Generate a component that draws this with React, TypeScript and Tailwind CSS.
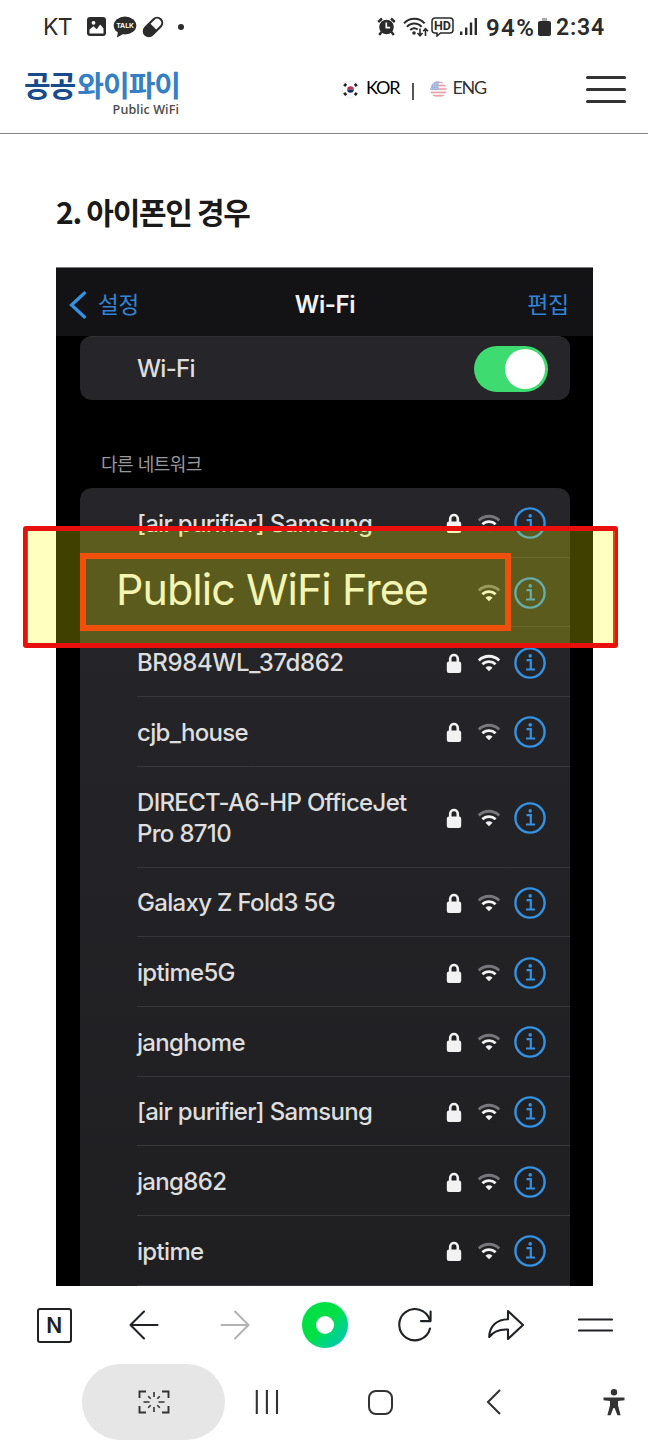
import React from 'react';

interface Network {
  name: string;
  tall?: boolean;
  strong?: boolean;
}

const networks: Network[] = [
  { name: 'BR984WL_37d862', strong: true },
  { name: 'cjb_house' },
  { name: 'DIRECT-A6-HP OfficeJet Pro 8710', tall: true },
  { name: 'Galaxy Z Fold3 5G' },
  { name: 'iptime5G' },
  { name: 'janghome' },
  { name: '[air purifier] Samsung' },
  { name: 'jang862' },
  { name: 'iptime' },
];

const LockIcon = () => (
  <svg width="16" height="22" viewBox="0 0 16 22" fill="none">
    <path d="M4.200 11V6.800a3.800 3.800 0 0 1 7.600 0V11" stroke="#f2f2f2" strokeWidth="2.6" />
    <rect x="0.8" y="9.500" width="14.400" height="11.500" rx="2.200" fill="#f2f2f2" />
  </svg>
);

const WifiIcon = ({ strong }: { strong?: boolean }) => (
  <svg width="24" height="18" viewBox="0 0 24 18" fill="none" strokeWidth="2.8">
    <path d="M1.800 6.400a14.600 14.600 0 0 1 20.400 0" stroke={strong ? '#f2f2f2' : '#77777b'} />
    <path d="M5.400 10.300a9.400 9.400 0 0 1 13.200 0" stroke="#f2f2f2" />
    <path d="M12 17.300l-3.500-3.600a5 5 0 0 1 7 0z" fill="#f2f2f2" />
  </svg>
);

const InfoIcon = () => (
  <svg width="32" height="32" viewBox="0 0 32 32" fill="none" stroke="#3492e2">
    <circle cx="16" cy="16" r="14.600" strokeWidth="2.4" />
    <path d="M12.500 13.200h4.300v9.300M12 22.500h9" strokeWidth="2.2" />
    <circle cx="16.200" cy="8.900" r="1.800" fill="#3492e2" stroke="none" />
  </svg>
);

const RowIcons = ({ locked = true, strong }: { locked?: boolean; strong?: boolean }) => (
  <div className="flex shrink-0 items-center pt-[2px]">
    <div className="w-4">{locked && <LockIcon />}</div>
    <div className="ml-[15px]"><WifiIcon strong={strong} /></div>
    <div className="ml-[13px]"><InfoIcon /></div>
  </div>
);

const NetworkRow = ({ name, tall, strong }: Network) => (
  <div className="pl-[57px]">
    <div
      className={`flex items-center justify-between border-b border-[#38383c] pr-6 ${
        tall ? 'h-[100.8px]' : 'h-[69.7px]'
      }`}
    >
      <span
        className={`w-[290px] pt-[2px] text-[24px] leading-[31px] font-medium text-[#dedede] ${
          strong ? 'tracking-[-0.4px]' : 'tracking-[-0.68px]'
        }`}
      >
        {name}
      </span>
      <RowIcons strong={strong} />
    </div>
  </div>
);

const StatusBar = () => (
  <div className="flex h-[53px] items-center justify-between pr-[43px] pl-[43px] text-[#2b2b2b]">
    <div className="flex items-center">
      <span className="w-[44px] pt-[2px] font-['Inter'] text-[23px] leading-none tracking-[-0.8px]">KT</span>
      <svg width="19" height="19" viewBox="0 0 19 19">
        <rect width="19" height="19" rx="3" fill="#2b2b2b" />
        <circle cx="6.500" cy="5.800" r="1.900" fill="#fff" />
        <path d="M2.500 16.500v-4l4-3.300 3.200 3 3.500-4.600 3.300 4v4.900z" fill="#fff" />
      </svg>
      <svg className="ml-[7px]" width="24" height="22" viewBox="0 0 24 22">
        <ellipse cx="12" cy="9.500" rx="11.300" ry="9" fill="#2b2b2b" />
        <path d="M5 15l-1 6.500 7-4z" fill="#2b2b2b" />
        <text x="12" y="12.200" textAnchor="middle" fontSize="6.800" fontWeight="700" fontFamily="Inter, sans-serif" fill="#fff">TALK</text>
      </svg>
      <svg className="ml-[5px]" width="22" height="22" viewBox="0 0 22 22">
        <g transform="rotate(-45 11 11)">
          <rect x="-1" y="4.900" width="24" height="12.200" rx="6.100" fill="#2b2b2b" />
          <path d="M11.500 7h5.400a4 4 0 0 1 0 8h-5.400z" fill="#fff" />
        </g>
      </svg>
      <div className="ml-[14px] size-[6px] rounded-full bg-[#2b2b2b]" />
    </div>
    <div className="flex items-center">
      <svg width="19" height="19" viewBox="0 0 19 19" fill="none" stroke="#2b2b2b">
        <circle cx="9.500" cy="10" r="7.300" fill="#2b2b2b" stroke="none" />
        <path d="M1.200 5L5 1.500M17.800 5L14 1.500M4.500 15l-2.300 3M14.500 15l2.300 3" strokeWidth="2.4" />
        <path d="M9.300 5.500v5.200h3.800" stroke="#fff" strokeWidth="1.700" />
      </svg>
      <svg className="ml-[7px]" width="26" height="20" viewBox="0 0 26 20" fill="none" stroke="#2b2b2b" strokeWidth="2">
        <path d="M1 6.300a13.800 13.800 0 0 1 20.600 0M4 9.800a9.500 9.500 0 0 1 14.600 0M7.200 13.100a5.300 5.300 0 0 1 7.500-.6" />
        <circle cx="11" cy="16" r="1.800" fill="#2b2b2b" stroke="none" />
        <path d="M17 11.500v7M14.500 16l2.500 2.700 2.500-2.700M22.500 19v-7M20.200 14.300l2.300-2.600 2.600 2.600" strokeWidth="1.600" />
      </svg>
      <svg className="ml-[2px]" width="23" height="20" viewBox="0 0 23 20">
        <path d="M4 1h15a3 3 0 0 1 3 3v9a3 3 0 0 1-3 3H9.500L6 19v-3H4a3 3 0 0 1-3-3V4a3 3 0 0 1 3-3z" fill="none" stroke="#2b2b2b" strokeWidth="1.500" />
        <text x="11.500" y="13" textAnchor="middle" fontSize="12.500" fontWeight="700" fontFamily="Roboto, sans-serif" fill="#2b2b2b">HD</text>
      </svg>
      <svg className="ml-[6px]" width="18" height="19" viewBox="0 0 18 19" fill="#2b2b2b">
        <rect x="0" y="14.500" width="2.400" height="3.500" />
        <rect x="5" y="10.500" width="2.400" height="7.500" />
        <rect x="9.800" y="5.500" width="2.400" height="12.500" />
        <rect x="14.600" y="1" width="2.400" height="17" />
      </svg>
      <span className="ml-[8px] w-[51px] pt-[2px] font-['Roboto'] text-[24px] leading-none font-semibold tracking-[1.4px] whitespace-nowrap">94%</span>
      <div className="ml-[1px] flex flex-col items-center">
        <div className="h-[3px] w-[5px] bg-[#aaa]" />
        <div className="h-[15px] w-[13px] rounded-[2px] bg-[#2b2b2b]" />
      </div>
      <span className="ml-[5px] w-[49px] pt-[2px] font-['Roboto'] text-[23px] leading-none font-semibold tracking-[0.8px] whitespace-nowrap">2:34</span>
    </div>
  </div>
);

const KoreaFlag = () => (
  <svg width="17" height="17" viewBox="0 0 17 17">
    <circle cx="8.500" cy="8.500" r="8" fill="#fff" stroke="#e3e3e3" strokeWidth="0.800" />
    <path d="M5.200 8.500a3.300 3.300 0 0 1 6.600 0z" fill="#c0304a" />
    <path d="M5.200 8.500a3.300 3.300 0 0 0 6.600 0z" fill="#1c2b66" />
    <path d="M2.200 5.200l2-2.400M12.800 2.800l2 2.400M2.200 11.800l2 2.400M12.800 14.200l2-2.400" stroke="#222" strokeWidth="2.600" />
  </svg>
);

const UsaFlag = () => (
  <svg width="17" height="17" viewBox="0 0 17 17">
    <clipPath id="usa">
      <circle cx="8.500" cy="8.500" r="8.200" />
    </clipPath>
    <g clipPath="url(#usa)">
      <rect width="17" height="17" fill="#f8f0f2" />
      <path d="M0 1.200h17M0 4.600h17M0 8h17M0 11.400h17M0 14.800h17" stroke="#eba0a6" strokeWidth="1.500" />
      <rect width="8.500" height="9" fill="#9fb2dc" />
      <path d="M1 3h7M1 5.200h7M1 7.400h7" stroke="#dfe6f5" strokeWidth="0.800" strokeDasharray="1 1.200" />
    </g>
  </svg>
);

const SiteHeader = () => (
  <header className="flex h-[81px] border-b border-[#858585] pr-[22px] pl-6">
    <div className="flex w-[156px] flex-col items-end pt-[13px]">
      <div className="font-['Noto_Sans_CJK_KR'] text-[29px] leading-[37px] font-bold tracking-[-1px] whitespace-nowrap">
        <span className="text-[#174b8c]">공공</span>
        <span className="ml-[2px] text-[#3580c4]">와이파이</span>
      </div>
      <span className="pr-[1px] font-['Open_Sans'] text-[12.5px] leading-[14px] font-semibold tracking-[0.1px] text-[#4c4c4c]">Public WiFi</span>
    </div>
    <div className="ml-[162px] flex items-start pt-[24px] font-['Lato'] text-[18px] leading-[20px]">
      <div className="pt-[4px]"><KoreaFlag /></div>
      <span className="ml-[7px] w-[34px] tracking-[-1.1px] text-black">KOR</span>
      <div className="mt-[6px] ml-[12px] h-[17px] w-[1.5px] bg-[#555]" />
      <div className="ml-[16px] pt-[4px]"><UsaFlag /></div>
      <span className="ml-[6px] tracking-[-1.3px] text-[#333]">ENG</span>
    </div>
    <button className="mt-[23px] ml-auto flex h-[27px] w-10 flex-col justify-between" aria-label="메뉴">
      <span className="h-[3px] w-full rounded bg-[#333]" />
      <span className="h-[3px] w-full rounded bg-[#333]" />
      <span className="h-[3px] w-full rounded bg-[#333]" />
    </button>
  </header>
);

const PhoneScreen = () => (
  <div className="relative mt-[36px] ml-[56px] h-[1019px] w-[537px] border-t border-[#777] bg-black font-['Inter','Noto_Sans_CJK_KR',sans-serif]">
    <div className="flex h-[68px] items-center justify-between bg-[#131315] pt-[6px] pr-[24px] pl-[13px] text-[24px] text-[#3184d4]">
      <div className="flex w-[110px] items-center">
        <svg width="18" height="28" viewBox="0 0 18 28" fill="none" stroke="#3492e2" strokeWidth="3.200" strokeLinecap="round">
          <path d="M15.500 2L2.500 14l13 12" />
        </svg>
        <span className="ml-[11px] text-[22.5px] tracking-[-0.3px]">설정</span>
      </div>
      <span className="pl-[12px] font-semibold tracking-[-0.4px] text-[#f2f2f2]">Wi-Fi</span>
      <span className="w-[110px] text-right text-[23px] tracking-[-0.3px]">편집</span>
    </div>

    <div className="mx-6 flex h-[64px] w-[490px] items-center justify-between rounded-xl border-t border-[#303034] bg-[#25252a] pr-[22px] pl-[57px]">
      <span className="text-[24px] font-medium tracking-[-0.7px] text-[#dedede]">Wi-Fi</span>
      <div className="flex h-[46px] w-[74px] items-center justify-end rounded-full bg-[#3edb70] pr-[3px]">
        <div className="size-[40px] rounded-full bg-white" />
      </div>
    </div>

    <div className="flex h-[88px] items-end pb-[11px] pl-[45px] text-[18px] leading-[24px] tracking-[-0.5px] text-[#98989d]">다른 네트워크</div>

    <div className="mx-6 h-[798px] w-[490px] overflow-hidden rounded-t-xl bg-linear-to-b from-[#26262a] to-[#1f1f22]">
      <NetworkRow name="[air purifier] Samsung" />
      <div className="pl-[36px]">
        <div className="flex h-[69.7px] items-center justify-between border-b border-[#38383c] pr-6">
          <span className="mb-[6px] text-[43px] leading-none tracking-[-0.95px] whitespace-nowrap text-[#f2f2ee]">Public WiFi Free</span>
          <RowIcons locked={false} />
        </div>
      </div>
      {networks.map((network, i) => (
        <NetworkRow key={i} {...network} />
      ))}
    </div>

    {/* Highlight over the network to pick */}
    <div className="absolute top-[285px] left-[24px] h-[78px] w-[431px] border-[6px] border-[#eb1410]" />
    <div className="absolute top-[258px] left-[-33px] h-[122px] w-[595px] rounded-[3px] border-[5px] border-r-[3px] border-l-[4px] border-[#e80f0c] bg-[#ffff00]/25 bg-clip-padding shadow-[inset_-2px_0_#e4480e,inset_1px_0_#e4480e]" />
  </div>
);

const BrowserBar = () => (
  <nav className="grid h-[78px] grid-cols-7 place-items-center bg-white pr-[7px] pl-[9px] text-[#202124]">
    <div className="flex size-[35px] items-center justify-center rounded-[3px] border-2 border-[#202124]">
      <span className="font-['Inter'] text-[21px] leading-none font-semibold">N</span>
    </div>
    <svg width="30" height="30" viewBox="0 0 30 30" fill="none" stroke="currentColor" strokeWidth="2.100" strokeLinecap="round" strokeLinejoin="round">
      <path d="M28.500 15H1.500M15 1.500L1.500 15 15 28.500" />
    </svg>
    <svg width="30" height="30" viewBox="0 0 30 30" fill="none" stroke="#b3b3b5" strokeWidth="2.100" strokeLinecap="round" strokeLinejoin="round">
      <path d="M1.500 15h27M15 1.500L28.500 15 15 28.500" />
    </svg>
    <div className="flex size-[46px] items-center justify-center rounded-full bg-linear-to-br from-[#00e045] from-50% to-[#10bfc0] shadow-[0_0_2px_#8ff0d8]">
      <div className="size-[18px] rounded-full bg-white" />
    </div>
    <svg width="34" height="34" viewBox="0 0 34 34" fill="none" stroke="currentColor" strokeWidth="2.100" strokeLinecap="round" strokeLinejoin="round">
      <path d="M32 20.500A15.600 15.600 0 1 1 31.600 11.600M32.600 3.500v9.600H23" />
    </svg>
    <svg width="36" height="32" viewBox="0 0 36 32" fill="none" stroke="currentColor" strokeWidth="2.100" strokeLinejoin="round">
      <path d="M20 2l15 14-15 14v-9.400C11 20 5.500 22.500 1.200 28 1.500 17 9 10.500 20 10.300z" />
    </svg>
    <svg width="35" height="14" viewBox="0 0 35 14" stroke="currentColor" strokeWidth="2.100" strokeLinecap="round">
      <path d="M1 1.500h33M1 12.500h33" />
    </svg>
  </nav>
);

const SystemBar = () => (
  <div className="flex h-[76px] items-center bg-white pl-[82px] text-[#333]">
    <div className="flex h-[76px] w-[143px] items-center justify-center rounded-full bg-[#e6e6e6]">
      <svg width="32" height="24" viewBox="0 0 32 24" fill="none" stroke="currentColor" strokeWidth="1.900">
        <path d="M1.500 8V1.500H8M24 1.500h6.500V8M1.500 16v6.500H8M24 22.500h6.500V16" />
        <path d="M16 2v5M16 17v5M5.500 12h6M20.500 12h6M10.200 6.200l2.500 2.500M21.800 6.200l-2.500 2.500M10.200 17.800l2.500-2.500M21.800 17.800l-2.500-2.500" strokeWidth="1.600" />
      </svg>
    </div>
    <div className="flex w-[84px] justify-center">
      <svg width="24" height="24" viewBox="0 0 24 24" stroke="currentColor" strokeWidth="2.100">
        <path d="M1.800 0v24M11.900 0v24M22 0v24" />
      </svg>
    </div>
    <div className="flex w-[142px] justify-center">
      <div className="size-[25px] rounded-[8px] border-2 border-[#333]" />
    </div>
    <div className="flex w-[84px] justify-center">
      <svg width="15" height="26" viewBox="0 0 15 26" fill="none" stroke="currentColor" strokeWidth="2.100">
        <path d="M14 1L2 13l12 12" />
      </svg>
    </div>
    <div className="ml-[58px] flex w-[42px] justify-center">
      <svg width="22" height="27" viewBox="0 0 22 27" fill="#333">
        <circle cx="11" cy="3.300" r="3.200" />
        <path d="M0.500 8.600h21v2.600l-6.500.8v4.200l2.600 10h-3.200L11.600 19h-1.200l-2.800 7.200H4.400l2.600-10V12L.5 11.200z" />
      </svg>
    </div>
  </div>
);

export default function App() {
  return (
    <div className="flex h-[1440px] w-[648px] flex-col overflow-hidden bg-white font-['Inter','Noto_Sans_CJK_KR',sans-serif]">
      <StatusBar />
      <SiteHeader />
      <main className="h-[1152px] overflow-hidden pt-[57px]">
        <h1 className="pl-[56px] font-['Noto_Sans_CJK_KR'] text-[30px] leading-[40px] font-bold tracking-[-1.3px] text-[#1a1a1a]">2. 아이폰인 경우</h1>
        <PhoneScreen />
      </main>
      <BrowserBar />
      <SystemBar />
    </div>
  );
}
